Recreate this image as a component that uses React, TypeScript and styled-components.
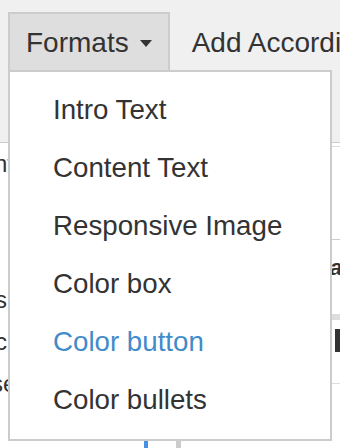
import React from 'react';
import styled, { createGlobalStyle } from 'styled-components';

const GlobalStyle = createGlobalStyle`
  html, body { margin: 0; padding: 0; background: #fff; }
  body { font-family: "Liberation Sans", Arial, Helvetica, sans-serif; color: #333; }
`;

const Page = styled.div`
  position: relative;
  width: 340px;
  height: 448px;
  overflow: hidden;
  display: flex;
  flex-direction: column;
  background: #fff;
`;

const Toolbar = styled.div`
  flex: 0 0 143px;
  box-sizing: border-box;
  background: #f0f0f0;
  border-bottom: 1px solid #ccc;
  padding: 12px 0 0 8px;
  display: flex;
  align-items: flex-start;
  white-space: nowrap;
  overflow: hidden;
`;

const ToolButton = styled.div<{ $active?: boolean }>`
  flex: 0 0 auto;
  box-sizing: border-box;
  height: 58px;
  padding: 13px ${p => (p.$active ? '16px' : '0')} 0 ${p => (p.$active ? '16px' : '20px')};
  border: 2px solid ${p => (p.$active ? '#ccc' : 'transparent')};
  border-bottom: none;
  background: ${p => (p.$active ? '#dedede' : 'transparent')};
  font-size: 28px;
  line-height: 32px;
  color: #333;
  display: flex;
  align-items: flex-start;
`;

const Label = styled.span`
  display: block;
`;

const Caret = styled.span`
  display: block;
  width: 0;
  height: 0;
  margin: 13px 0 0 11px;
  border-top: 7px solid #333;
  border-left: 6.5px solid transparent;
  border-right: 6.5px solid transparent;
`;

const Body = styled.div`
  flex: 1 1 auto;
  display: grid;
  grid-template-columns: 9px 1fr 8px;
  min-height: 0;
`;

const Gutter = styled.div`
  overflow: hidden;
  display: flex;
  flex-direction: column;
`;

const Fragment = styled.div<{ $gap: number; $indent: number; $faint?: boolean }>`
  margin-top: ${p => p.$gap}px;
  font-size: 24px;
  line-height: 42px;
  white-space: nowrap;
  text-indent: ${p => p.$indent}px;
  color: ${p => (p.$faint ? '#bbb' : '#333')};
`;

const Middle = styled.div`
  display: flex;
  flex-direction: column;
  justify-content: flex-end;
`;

const BarRow = styled.div`
  height: 7px;
  display: flex;
  gap: 28px;
  padding-left: 135px;
`;

const Bar = styled.div<{ $color: string; $w: number }>`
  width: ${p => p.$w}px;
  background: ${p => p.$color};
`;

const SidePanel = styled.div`
  overflow: hidden;
  display: flex;
  flex-direction: column;
  padding-top: 3px;
`;

const PanelRule = styled.div<{ $gap: number; $color?: string }>`
  margin-top: ${p => p.$gap}px;
  height: 1px;
  background: ${p => p.$color || '#ddd'};
`;

const PanelText = styled.div`
  margin-top: 16px;
  font-size: 22px;
  line-height: 24px;
  font-weight: bold;
  font-style: italic;
  white-space: nowrap;
  color: #333;
  text-indent: -2px;
`;

const PanelBand = styled.div`
  margin-top: 34px;
  height: 6px;
  background: #ddd;
`;

const PanelMark = styled.div`
  margin: 9px 0 0 3px;
  height: 23px;
  background: #333;
`;

const Menu = styled.ul`
  position: absolute;
  left: 8px;
  top: 70px;
  width: 324px;
  box-sizing: border-box;
  margin: 0;
  padding: 9px 0 10px;
  list-style: none;
  background: #fff;
  border: 2px solid #ccc;
`;

const MenuItem = styled.li<{ $active?: boolean }>`
  height: 58px;
  line-height: 58px;
  padding-left: 43px;
  font-size: 27.7px;
  white-space: nowrap;
  color: ${p => (p.$active ? '#428bca' : '#333')};
`;

const items = [
  'Intro Text',
  'Content Text',
  'Responsive Image',
  'Color box',
  'Color button',
  'Color bullets',
];

export default function App() {
  return (
    <>
      <GlobalStyle />
      <Page>
        <Toolbar>
          <ToolButton $active>
            <Label>Formats</Label>
            <Caret />
          </ToolButton>
          <ToolButton>
            <Label>Add Accordion</Label>
          </ToolButton>
        </Toolbar>
        <Body>
          <Gutter>
            <Fragment $gap={0} $indent={-6}>nt</Fragment>
            <Fragment $gap={60} $indent={-9} $faint>,</Fragment>
            <Fragment $gap={-8} $indent={-5}>s</Fragment>
            <Fragment $gap={0} $indent={-5}>c</Fragment>
            <Fragment $gap={0} $indent={-9}>se</Fragment>
          </Gutter>
          <Middle>
            <BarRow>
              <Bar $color="#4a90e2" $w={4} />
              <Bar $color="#ccc" $w={5} />
            </BarRow>
          </Middle>
          <SidePanel>
            <PanelRule $gap={0} />
            <PanelRule $gap={92} $color="#ccc" />
            <PanelText>a</PanelText>
            <PanelBand />
            <PanelMark />
            <PanelRule $gap={31} />
          </SidePanel>
        </Body>
        <Menu>
          {items.map(label => (
            <MenuItem key={label} $active={label === 'Color button'}>
              {label}
            </MenuItem>
          ))}
        </Menu>
      </Page>
    </>
  );
}
